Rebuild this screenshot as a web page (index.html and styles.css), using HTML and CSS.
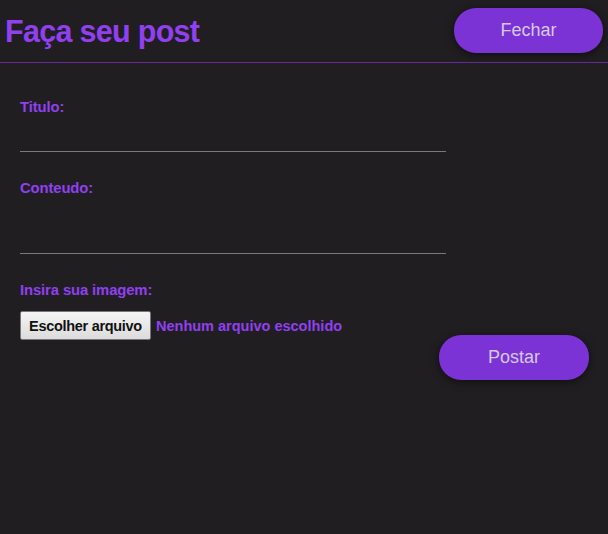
FILE: index.html
```html
<!DOCTYPE html>
<html lang="pt-BR">
<head>
<meta charset="utf-8">
<title>Faça seu post</title>
<link rel="stylesheet" href="styles.css">
</head>
<body>
<header class="topbar">
  <h1 class="title">Faça seu post</h1>
  <button class="pill-btn" type="button">Fechar</button>
</header>
<form class="post-form">
  <div class="field">
    <label class="field-label">Titulo:</label>
    <input class="field-input" type="text">
  </div>
  <div class="field">
    <label class="field-label">Conteudo:</label>
    <textarea class="field-input field-area"></textarea>
  </div>
  <div class="field field-file">
    <label class="field-label">Insira sua imagem:</label>
  </div>
  <div class="actions">
    <div class="file-picker">
      <span class="file-btn">Escolher arquivo</span>
      <span class="file-name">Nenhum arquivo escolhido</span>
    </div>
    <button class="pill-btn post-btn" type="button">Postar</button>
  </div>
</form>
</body>
</html>
```
FILE: styles.css
```css
html, body {
  margin: 0;
  padding: 0;
  background: #201e21;
}
body {
  width: 608px;
  height: 534px;
  font-family: "Liberation Sans", Arial, sans-serif;
}
.topbar {
  display: flex;
  justify-content: space-between;
  align-items: flex-start;
  padding: 8px 5px 9px 5px;
  border-bottom: 1px solid #6a2a9e;
}
.title {
  margin: 5px 0 0 0;
  font-size: 30.5px;
  line-height: 36px;
  font-weight: 700;
  color: #9140ef;
  letter-spacing: -0.7px;
}
.pill-btn {
  width: 149px;
  height: 45px;
  border: none;
  border-radius: 22px;
  background: #7b33d5;
  color: #d6c8e8;
  font-family: "Liberation Sans", Arial, sans-serif;
  font-size: 18px;
  box-shadow: 0 2px 8px rgba(0, 0, 0, 0.55);
  padding: 0;
}
.post-form {
  padding: 36px 19px 0 20px;
}
.field {
  width: 426px;
  margin-bottom: 28px;
}
.field-label {
  display: block;
  font-size: 14.8px;
  line-height: 17px;
  font-weight: 700;
  color: #9140ef;
  letter-spacing: -0.1px;
}
.field-input {
  display: block;
  box-sizing: border-box;
  width: 426px;
  height: 36px;
  margin: 0;
  padding: 0;
  background: transparent;
  border: none;
  border-bottom: 1px solid #7a787b;
  outline: none;
  resize: none;
}
.field-area {
  height: 57px;
}
.field-file {
  margin-bottom: 12px;
}
.actions {
  display: flex;
  justify-content: space-between;
  align-items: flex-start;
}
.file-picker {
  display: flex;
  align-items: center;
  gap: 5px;
}
.file-btn {
  box-sizing: border-box;
  width: 131px;
  height: 29px;
  padding: 0;
  display: flex;
  align-items: center;
  justify-content: center;
  border: 1px solid #767676;
  border-radius: 2px;
  background: linear-gradient(#f4f4f4, #dcdcdc);
  color: #111;
  font-size: 14.5px;
  font-weight: 700;
  letter-spacing: -0.3px;
  white-space: nowrap;
}
.file-name {
  font-size: 14.5px;
  font-weight: 700;
  color: #9140ef;
  letter-spacing: 0;
}
.post-btn {
  width: 150px;
  margin-top: 24px;
}
```
